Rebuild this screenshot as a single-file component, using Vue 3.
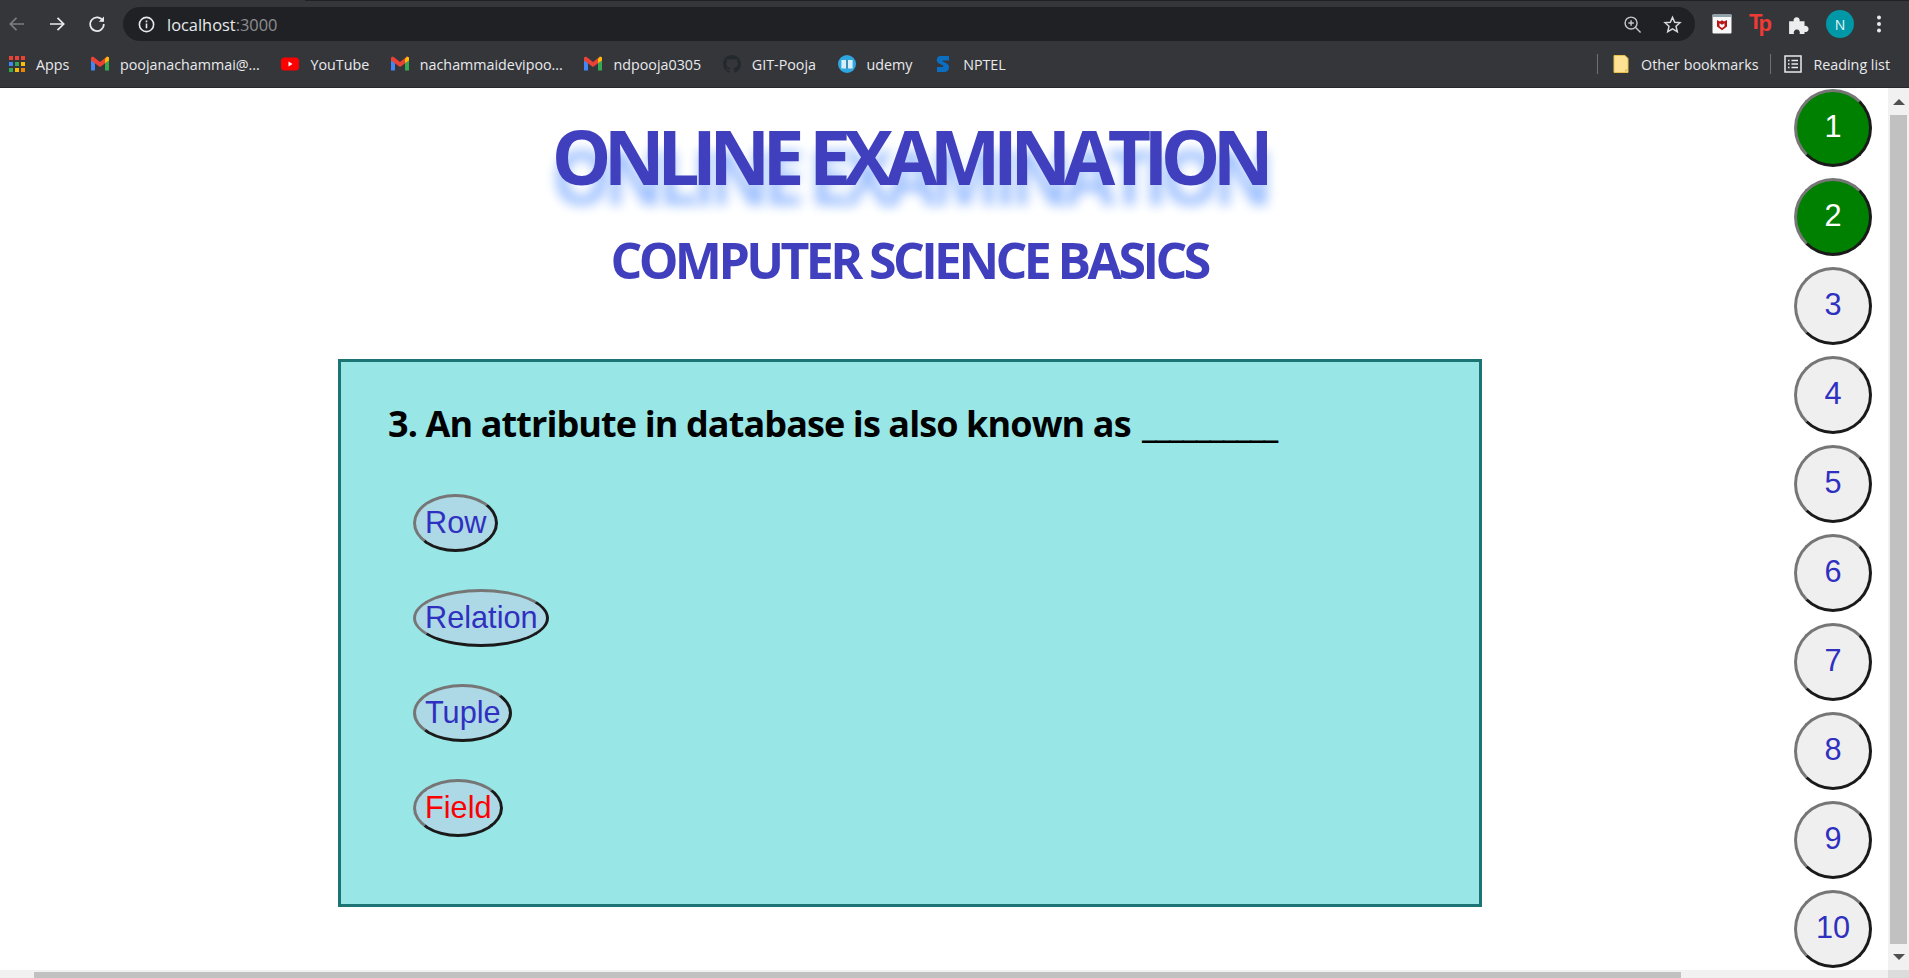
<script setup>
const bookmarks = [
  { name: 'poojanachammai@...', icon: 'gmail' },
  { name: 'YouTube', icon: 'youtube' },
  { name: 'nachammaidevipoo...', icon: 'gmail' },
  { name: 'ndpooja0305', icon: 'gmail' },
  { name: 'GIT-Pooja', icon: 'github' },
  { name: 'udemy', icon: 'udemy' },
  { name: 'NPTEL', icon: 'nptel' },
]

const opciones = [
  { texto: 'Row' },
  { texto: 'Relation' },
  { texto: 'Tuple' },
  { texto: 'Field', elegida: true },
]

const preguntas = [1, 2, 3, 4, 5, 6, 7, 8, 9, 10]
const respondidas = [1, 2]
</script>

<template>
  <div class="ventana">
    <header class="chrome">
      <div class="tabs-strip"><div class="tab-linea"></div></div>
      <div class="toolbar">
        <svg class="nav-icon" viewBox="0 0 20 20" fill="none" stroke="#7b7d80" stroke-width="1.7"><path d="M17 10H3.500M9.500 3.800 3.300 10l6.200 6.200" /></svg>
        <svg class="nav-icon" viewBox="0 0 20 20" fill="none" stroke="#e8eaed" stroke-width="1.7"><path d="M3 10h13.500M10.500 3.800l6.200 6.200-6.200 6.200" /></svg>
        <svg class="nav-icon" viewBox="0 0 20 20" fill="none" stroke="#e8eaed" stroke-width="1.7"><path d="M16 7a6.800 6.800 0 1 0 .8 3" /><path d="M17 2.600v5.200h-5.200z" fill="#e8eaed" stroke="none" /></svg>
        <div class="omnibox">
          <svg class="info" viewBox="0 0 16 16" fill="none" stroke="#e8eaed" stroke-width="1.500"><circle cx="8" cy="8" r="6.700" /><path d="M8 7v4.600M8 4.200v1.600" /></svg>
          <span class="url">localhost<span class="puerto">:3000</span></span>
          <svg class="omni-der lupa" viewBox="0 0 20 20" fill="none" stroke="#c4c7c9" stroke-width="1.500"><circle cx="8.500" cy="8.500" r="6.300" /><path d="M13 13l5.500 5.500M8.500 5.600v5.800M5.600 8.500h5.800" /></svg>
          <svg class="omni-der estrella" viewBox="0 0 20 20" fill="none" stroke="#d5d7d9" stroke-width="1.600"><path d="M10 2.400l2.300 5.200 5.600.5-4.200 3.800 1.300 5.600L10 14.600l-5 2.900 1.300-5.600L2.100 8.100l5.600-.5z" /></svg>
        </div>
        <div class="extensiones">
          <svg class="ext" viewBox="0 0 20 20"><rect x="0.500" y="0.500" width="19" height="19" rx="1" fill="#f8f8f8" /><rect x="0.500" y="0.500" width="19" height="2.500" fill="#8fa3ad" /><path d="M5 6l3 1.500 2-1.300 2 1.300 3-1.500v6.500l-5 3.800-5-3.800z" fill="#b81414" /><path d="M7.500 9.300v2.900l2.500 1.900 2.500-1.900V9.300l-2.500 1.500z" fill="#f8f8f8" /></svg>
          <span class="tp">T<span class="tp-p">p</span></span>
          <svg class="ext puzzle" viewBox="0 0 20 20" fill="#eceded"><path d="M1 7.500h4.200a2.800 2.800 0 1 1 5.300 0H15v4.300a2.800 2.800 0 1 1 0 5.300V19H10.500a2.800 2.800 0 1 0-5 0H1z" /></svg>
          <div class="avatar">N</div>
          <svg class="kebab" viewBox="0 0 6 20" fill="#e8eaed"><circle cx="3" cy="3.500" r="2" /><circle cx="3" cy="10" r="2" /><circle cx="3" cy="16.500" r="2" /></svg>
        </div>
      </div>
      <div class="bookmarks">
        <div class="bm">
          <svg class="bm-icon apps" viewBox="0 0 16 16">
            <rect x="0" y="0" width="4" height="4" fill="#ea4335" /><rect x="6" y="0" width="4" height="4" fill="#ea4335" /><rect x="12" y="0" width="4" height="4" fill="#ea4335" />
            <rect x="0" y="6" width="4" height="4" fill="#4285f4" /><rect x="6" y="6" width="4" height="4" fill="#34a853" /><rect x="12" y="6" width="4" height="4" fill="#fbbc05" />
            <rect x="0" y="12" width="4" height="4" fill="#34a853" /><rect x="6" y="12" width="4" height="4" fill="#fbbc05" /><rect x="12" y="12" width="4" height="4" fill="#ea8600" />
          </svg>
          <span>Apps</span>
        </div>
        <div v-for="b in bookmarks" :key="b.name" class="bm">
          <svg v-if="b.icon === 'gmail'" class="bm-icon" viewBox="0 0 18 16">
            <path d="M0 3v11.500h4V6.500z" fill="#4285f4" /><path d="M14 6.500v8h4V3z" fill="#34a853" />
            <path d="M0 1.500v3l9 6.500 9-6.500v-3L16 0.500 9 6 2 0.500z" fill="#ea4335" /><path d="M16 0.500l2 1v3l-4 2.500V3z" fill="#fbbc05" />
          </svg>
          <svg v-else-if="b.icon === 'youtube'" class="bm-icon" viewBox="0 0 18 16"><rect x="0" y="1.500" width="18" height="13" rx="3.500" fill="#ff0000" /><path d="M7.500 5.500v5l4-2.500z" fill="#fff" /></svg>
          <svg v-else-if="b.icon === 'github'" class="bm-icon" viewBox="0 0 16 16"><path fill="#24292e" d="M8 0C3.580 0 0 3.580 0 8c0 3.540 2.290 6.530 5.470 7.590.4.070.55-.17.55-.38v-1.340c-2.230.48-2.700-1.070-2.700-1.070-.36-.92-.89-1.170-.89-1.170-.73-.5.050-.49.050-.49.800.060 1.230.820 1.230.820.710 1.220 1.870.870 2.330.660.070-.520.280-.870.510-1.070-1.780-.200-3.640-.890-3.640-3.950 0-.870.310-1.590.820-2.150-.080-.200-.360-1.020.080-2.120 0 0 .670-.210 2.200.820a7.600 7.600 0 0 1 4 0c1.530-1.040 2.200-.820 2.200-.820.440 1.100.160 1.920.080 2.120.510.560.820 1.270.820 2.150 0 3.070-1.870 3.750-3.650 3.950.290.250.540.730.540 1.480v2.200c0 .210.150.460.550.380A8.010 8.010 0 0 0 16 8c0-4.420-3.580-8-8-8z" /></svg>
          <svg v-else-if="b.icon === 'udemy'" class="bm-icon" viewBox="0 0 16 16"><circle cx="8" cy="8" r="8" fill="#2ea7e0" /><path d="M3 4.500h4.500v7.500H3zM8.500 4.500H13v7.500H8.500z" fill="#d6f0fb" /><path d="M7.500 4.500h1v7.500h-1z" fill="#13618c" /></svg>
          <svg v-else class="bm-icon" viewBox="0 0 16 18"><path d="M14 1H5.500C3 1 1.800 3 1.800 5c0 2 1.200 3.200 3 4l3 1.200c1 .4.800 1.800-.4 1.800H2v5h7c3 0 5-2 5-4.800 0-2-1.200-3.400-3-4.200L8 6.800c-.8-.4-.6-1.400.4-1.400H14z" fill="#0a6fc2" /></svg>
          <span>{{ b.name }}</span>
        </div>
        <div class="bm-der">
          <i class="sep"></i>
          <div class="bm otros">
            <svg class="bm-icon" viewBox="0 0 16 18"><path d="M1 .500h11l3 3v14H1z" fill="#fde293" stroke="#e6c14f" /><path d="M12 17.500v-3h3z" fill="#e6c14f" /></svg>
            <span>Other bookmarks</span>
          </div>
          <i class="sep"></i>
          <div class="bm lista">
            <svg class="bm-icon" viewBox="0 0 18 18" fill="none" stroke="#e8eaed" stroke-width="1.500"><rect x="1" y="1" width="16" height="16" /><path d="M7.500 5.500h6.500M7.500 9h6.500M7.500 12.500h6.500M4 5.500h1.500M4 9h1.500M4 12.500h1.500" /></svg>
            <span>Reading list</span>
          </div>
        </div>
      </div>
    </header>

    <div class="pagina">
      <div class="contenido">
        <main class="examen">
          <h1 class="titulo">ONLINE EXAMINATION</h1>
          <h2 class="subtitulo">COMPUTER SCIENCE BASICS</h2>
          <section class="caja">
            <h3 class="pregunta">3. An attribute in database is also known as <span class="raya">__________</span></h3>
            <div class="opciones">
              <button v-for="o in opciones" :key="o.texto" class="opcion" :class="{ elegida: o.elegida }">{{ o.texto }}</button>
            </div>
          </section>
        </main>
        <nav class="numeros">
          <button v-for="n in preguntas" :key="n" class="numero" :class="{ hecha: respondidas.includes(n) }">{{ n }}</button>
        </nav>
        <div class="scroll-v">
          <i class="flecha arriba"></i>
          <div class="thumb-v"></div>
          <i class="flecha abajo"></i>
        </div>
      </div>
      <div class="scroll-h">
        <div class="thumb-h"></div>
        <div class="esquina"></div>
      </div>
    </div>
  </div>
</template>

<style>
body {
  overflow: hidden;
}
</style>

<style scoped>
.ventana {
  height: 100vh;
  display: flex;
  flex-direction: column;
  background: #fff;
  font-family: "Open Sans", sans-serif;
}

.chrome {
  height: 88px;
  background: #35363a;
  border-bottom: 1px solid #26272a;
  box-sizing: border-box;
  flex-shrink: 0;
}

.tabs-strip {
  height: 7px;
}

.tab-linea {
  height: 1px;
  margin-left: 305px;
  background: #202124;
}

.toolbar {
  height: 34px;
  display: flex;
  align-items: center;
  padding-left: 7px;
}

.nav-icon {
  width: 20px;
  height: 20px;
  margin-right: 20px;
}

.omnibox {
  width: 1572px;
  height: 34px;
  margin-left: -4px;
  border-radius: 17px;
  background: #202124;
  display: flex;
  align-items: center;
  padding-left: 15px;
  box-sizing: border-box;
}

.info {
  width: 17px;
  height: 17px;
}

.url {
  margin-left: 12px;
  color: #e8eaed;
  font-size: 16.4px;
  flex: 1;
}

.puerto {
  color: #8d8f92;
}

.omni-der {
  width: 19px;
  height: 19px;
}

.lupa {
  margin-right: 21px;
}

.estrella {
  margin-right: 13px;
}

.extensiones {
  display: flex;
  align-items: center;
  padding-left: 17px;
}

.ext {
  width: 20px;
  height: 20px;
}

.puzzle {
  width: 22px;
  height: 22px;
  margin-left: -1px;
  margin-right: -1px;
}

.tp {
  width: 20px;
  margin: -5px 20px 0 17px;
  color: #ef3b36;
  font: bold 22px/20px "Liberation Sans", sans-serif;
  white-space: nowrap;
  letter-spacing: -4px;
}

.tp-p {
  position: relative;
  top: 2px;
}

.avatar {
  width: 28px;
  height: 28px;
  margin-left: 17px;
  border-radius: 50%;
  background: #0097a7;
  color: #e8f6f8;
  font-size: 14px;
  display: flex;
  align-items: center;
  justify-content: center;
}

.kebab {
  width: 6px;
  height: 20px;
  margin-left: 22px;
}

.bookmarks {
  height: 46px;
  display: flex;
  align-items: center;
  padding-left: 9px;
  color: #e8eaed;
  font-size: 14.3px;
}

.bm {
  display: flex;
  align-items: center;
  gap: 8px;
  margin-right: 21.6px;
  white-space: nowrap;
}

.bm-icon {
  width: 18px;
  height: 18px;
  margin-right: 3px;
}

.bm-icon.apps {
  width: 16px;
  height: 16px;
}

.bm-der {
  margin-left: auto;
  display: flex;
  align-items: center;
}

.sep {
  width: 1px;
  height: 20px;
  background: #6e7073;
}

.otros {
  margin: 0 12px 0 14px;
}

.lista {
  margin: 0 19px 0 13px;
}

.pagina {
  flex: 1;
  display: flex;
  flex-direction: column;
  min-height: 0;
}

.contenido {
  flex: 1;
  display: flex;
  min-height: 0;
}

.examen {
  flex: 1;
  padding-left: 24px;
  display: flex;
  flex-direction: column;
  align-items: center;
}

.titulo {
  margin: 23px 0 0;
  font-size: 75px;
  line-height: 90px;
  font-weight: 700;
  color: #4040bf;
  letter-spacing: -7.6px;
  text-shadow: 0 20px 12px #9fc1ff;
}

.subtitulo {
  margin: 25px 0 0;
  font-size: 50px;
  line-height: 68px;
  font-weight: 700;
  color: #4040bf;
  letter-spacing: -3.6px;
}

.caja {
  width: 1144px;
  height: 548px;
  margin-top: 65px;
  margin-left: 2px;
  border: 3px solid #1c7474;
  background: #99e6e6;
  box-sizing: border-box;
  padding: 0 47px;
}

.pregunta {
  margin: 37px 0 0;
  font-size: 36px;
  line-height: 50px;
  font-weight: 700;
  color: #000;
  letter-spacing: -0.9px;
}

.raya {
  margin-left: 3px;
  letter-spacing: -1.3px;
}

.opciones {
  margin: 45px 0 0 25px;
  display: flex;
  flex-direction: column;
  align-items: flex-start;
  gap: 37px;
}

.opcion {
  height: 58px;
  padding: 0 8.5px 0 9px;
  border-radius: 50%;
  border: 3px solid;
  border-color: #767676 #1a1a1a #1a1a1a #767676;
  background: #add8e6;
  color: #3030c0;
  font: 30.7px "Liberation Sans", sans-serif;
}

.opcion.elegida {
  color: #ff0000;
}

.numeros {
  width: 78px;
  margin-right: 16px;
  padding-top: 1px;
  display: flex;
  flex-direction: column;
  gap: 11px;
}

.numero {
  width: 78px;
  height: 78px;
  padding: 0 0 2px;
  border-radius: 50%;
  border: 3px solid;
  border-color: #767676 #1a1a1a #1a1a1a #767676;
  background: #efefef;
  color: #3030c0;
  font: 30.7px "Liberation Sans", sans-serif;
}

.numero.hecha {
  background: #008000;
  color: #fff;
}

.scroll-v {
  width: 21px;
  background: #f1f1f1;
  display: flex;
  flex-direction: column;
  align-items: center;
}

.thumb-v {
  flex: 1;
  width: 17px;
  background: #c1c1c1;
}

.flecha {
  width: 0;
  box-sizing: border-box;
  border-left: 6px solid transparent;
  border-right: 6px solid transparent;
}

.arriba {
  height: 17px;
  border-top: 11px solid transparent;
  border-bottom: 6px solid #505050;
  margin-bottom: 10px;
}

.abajo {
  height: 6px;
  border-top: 6px solid #505050;
  margin: 10px 0;
}

.scroll-h {
  height: 8px;
  flex-shrink: 0;
  background: #f1f1f1;
  display: flex;
  padding-left: 34px;
}

.thumb-h {
  width: 1647px;
  height: 6px;
  margin-top: 2px;
  background: #c1c1c1;
}

.esquina {
  width: 21px;
  margin-left: auto;
  background: #dcdcdc;
}
</style>
